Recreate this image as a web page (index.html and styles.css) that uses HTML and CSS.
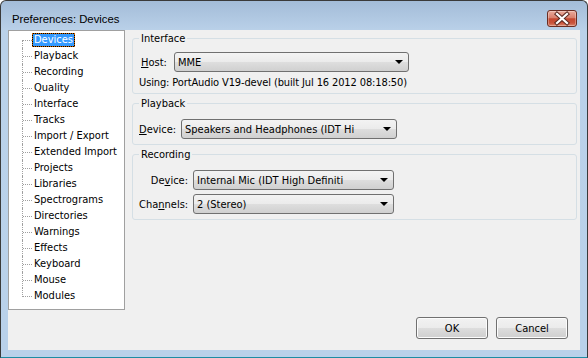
FILE: index.html
```html
<!DOCTYPE html>
<html lang="en">
<head>
    <meta charset="UTF-8">
    <title>Preferences: Devices</title>
    <link rel="stylesheet" href="styles.css">
</head>
<body>
<div class="window">
    <div class="titlebar">
        <span class="title">Preferences: Devices</span>
        <button class="close">
            <svg width="28" height="15" viewBox="0 0 28 15">
                <path d="M9 3 L19 12 M19 3 L9 12" stroke="#5b2a22" stroke-width="4.2" stroke-linecap="square"/>
                <path d="M9 3 L19 12 M19 3 L9 12" stroke="#fff" stroke-width="2.2" stroke-linecap="square"/>
            </svg>
        </button>
    </div>
    <div class="client">
        <div class="main">
            <ul class="tree">
                <li><span class="branch"></span><span class="node selected">Devices</span></li>
                <li><span class="branch"></span><span class="node">Playback</span></li>
                <li><span class="branch"></span><span class="node">Recording</span></li>
                <li><span class="branch"></span><span class="node">Quality</span></li>
                <li><span class="branch"></span><span class="node">Interface</span></li>
                <li><span class="branch"></span><span class="node">Tracks</span></li>
                <li><span class="branch"></span><span class="node">Import / Export</span></li>
                <li><span class="branch"></span><span class="node">Extended Import</span></li>
                <li><span class="branch"></span><span class="node">Projects</span></li>
                <li><span class="branch"></span><span class="node">Libraries</span></li>
                <li><span class="branch"></span><span class="node">Spectrograms</span></li>
                <li><span class="branch"></span><span class="node">Directories</span></li>
                <li><span class="branch"></span><span class="node">Warnings</span></li>
                <li><span class="branch"></span><span class="node">Effects</span></li>
                <li><span class="branch"></span><span class="node">Keyboard</span></li>
                <li><span class="branch"></span><span class="node">Mouse</span></li>
                <li><span class="branch"></span><span class="node">Modules</span></li>
            </ul>
            <div class="panel">
                <fieldset class="group group-interface">
                    <legend>Interface</legend>
                    <div class="row">
                        <label class="lbl lbl-host"><u>H</u>ost:</label>
                        <div class="combo combo-host"><span>MME</span><i class="arrow"></i></div>
                    </div>
                    <div class="info">Using: PortAudio V19-devel (built Jul 16 2012 08:18:50)</div>
                </fieldset>
                <fieldset class="group group-playback">
                    <legend>Playback</legend>
                    <div class="row">
                        <label class="lbl lbl-play"><u>D</u>evice:</label>
                        <div class="combo combo-play"><span>Speakers and Headphones (IDT Hi</span><i class="arrow"></i></div>
                    </div>
                </fieldset>
                <fieldset class="group group-recording">
                    <legend>Recording</legend>
                    <div class="row">
                        <label class="lbl lbl-rec">De<u>v</u>ice:</label>
                        <div class="combo combo-rec"><span>Internal Mic (IDT High Definiti</span><i class="arrow"></i></div>
                    </div>
                    <div class="row">
                        <label class="lbl lbl-rec">Cha<u>n</u>nels:</label>
                        <div class="combo combo-rec"><span>2 (Stereo)</span><i class="arrow"></i></div>
                    </div>
                </fieldset>
            </div>
        </div>
        <div class="buttons">
            <button class="btn">OK</button>
            <button class="btn">Cancel</button>
        </div>
    </div>
</div>
</body>
</html>
```

FILE: styles.css
```css
/* window frame */
*{
    box-sizing: border-box;
}
body{
    margin:0;
    background:#fff;
    font-family: "DejaVu Sans Condensed", "DejaVu Sans", sans-serif;
    font-stretch: condensed;
    font-size:11px;
    color:#000;
}
.window{
    width:588px; height:358px;
    border:1px solid #3a3a3a;
    border-bottom-color:#1d8ca3;
    border-radius:6px 6px 0 0;
    background: linear-gradient(#a3bcd8, #bad1e9 30px, #b9d1ea);
    display:flex;
    flex-direction: column;
    padding:0 7px 7px;
}
.titlebar{
    height:29px;
    display:flex;
    align-items:flex-start;
    justify-content: space-between;
    padding:0 3px 0 4px;
}
.title{
    font-family: "Liberation Sans", Arial, sans-serif;
    font-size:11.3px;
    line-height:16px;
    margin-top:10px;
    color:#000;
}
.close{
    width:30px; height:17px;
    margin-top:9px;
    padding:0;
    border:1px solid #6b2d22;
    border-radius:3px;
    background: linear-gradient(#eaab9c, #d9806d 45%, #c4472f 52%, #c9533b 80%, #dc876f);
    box-shadow: inset 0 0 0 1px rgba(255,255,255,.3);
    display:flex;
    align-items:center;
    justify-content:center;
}

/* client area */
.client{
    flex:1;
    background:#f0f0f0;
    display:flex;
    flex-direction: column;
}
.main{
    display:flex;
    height:280px;
}

/* tree */
.tree{
    width:117px; height:280px;
    margin:0;
    padding:1px 0 0 13px;
    list-style:none;
    background:#fff;
    border:1px solid #a0a0a0;
}
.tree li{
    height:16px;
    display:flex;
    align-items:center;
}
.branch{
    align-self:stretch;
    width:10px;
    border-left:1px dotted #a0a0a0;
    display:flex;
    align-items:center;
}
.branch::after{
    content:'';
    width:9px;
    border-top:1px dotted #a0a0a0;
}
.tree li:first-child .branch{
    align-self:flex-end;
    height:8px;
    align-items:flex-start;
}
.tree li:last-child .branch{
    align-self:flex-start;
    height:9px;
    align-items:flex-end;
}
.node{
    padding:0 1px;
    border:1px solid transparent;
    line-height:12px;
    white-space:nowrap;
}
.node.selected{
    color:#fff;
    border:1px dotted #cc6600;
    background: linear-gradient(#3399ff, #3399ff) padding-box, #000 border-box;
}

/* right panel */
.panel{
    flex:1;
    padding:2px 3px 0 7px;
    display:flex;
    flex-direction: column;
    gap:3px;
}
.group{
    margin:0;
    min-width:0;
    border:1px solid #d5dfe5;
    border-radius:3px;
    padding:0 6px 4px;
}
.group legend{
    padding:0 2px;
    line-height:13px;
}
.group-interface .row{ margin-top:7px; }
.group-playback .row{ margin-top:9px; }
.group-playback{ padding-bottom:5px; }
.group-recording{ padding-bottom:5px; }
.group-recording .row{ margin-top:4px; }
.group-recording .row:first-of-type{ margin-top:9px; }
.row{
    display:flex;
    align-items:center;
}
.lbl{
    flex:none;
    white-space:nowrap;
}
.lbl-host{ width:35px; padding-left:2px; }
.lbl-play{ width:42px; }
.lbl-rec{ width:54px; text-align:right; padding-right:5px; }
.info{
    margin-top:4px;
    line-height:13px;
    white-space:nowrap;
    letter-spacing:-0.12px;
}

/* combo boxes */
.combo{
    height:20px;
    border:1px solid #707070;
    border-radius:3px;
    background: linear-gradient(#f3f3f3, #ebebeb 50%, #dedede 50%, #d0d0d0);
    display:flex;
    align-items:center;
    justify-content: space-between;
    padding:0 5px 0 3px;
    white-space:nowrap;
    overflow:hidden;
}
.combo-host{ width:235px; }
.combo-play{ width:216px; }
.combo-rec{ width:201px; }
.arrow{
    flex:none;
    width:0; height:0;
    border-left:4px solid transparent;
    border-right:4px solid transparent;
    border-top:4px solid #000;
}

/* dialog buttons */
.buttons{
    display:flex;
    justify-content:flex-end;
    gap:8px;
    padding:7px 12px 0 0;
}
.btn{
    width:72px; height:22px;
    font:inherit;
    color:#000;
    border:1px solid #707070;
    border-radius:3px;
    background: linear-gradient(#f2f2f2, #ebebeb 50%, #dddddd 50%, #cfcfcf);
    box-shadow: inset 0 0 0 1px #fcfcfc;
}
```
